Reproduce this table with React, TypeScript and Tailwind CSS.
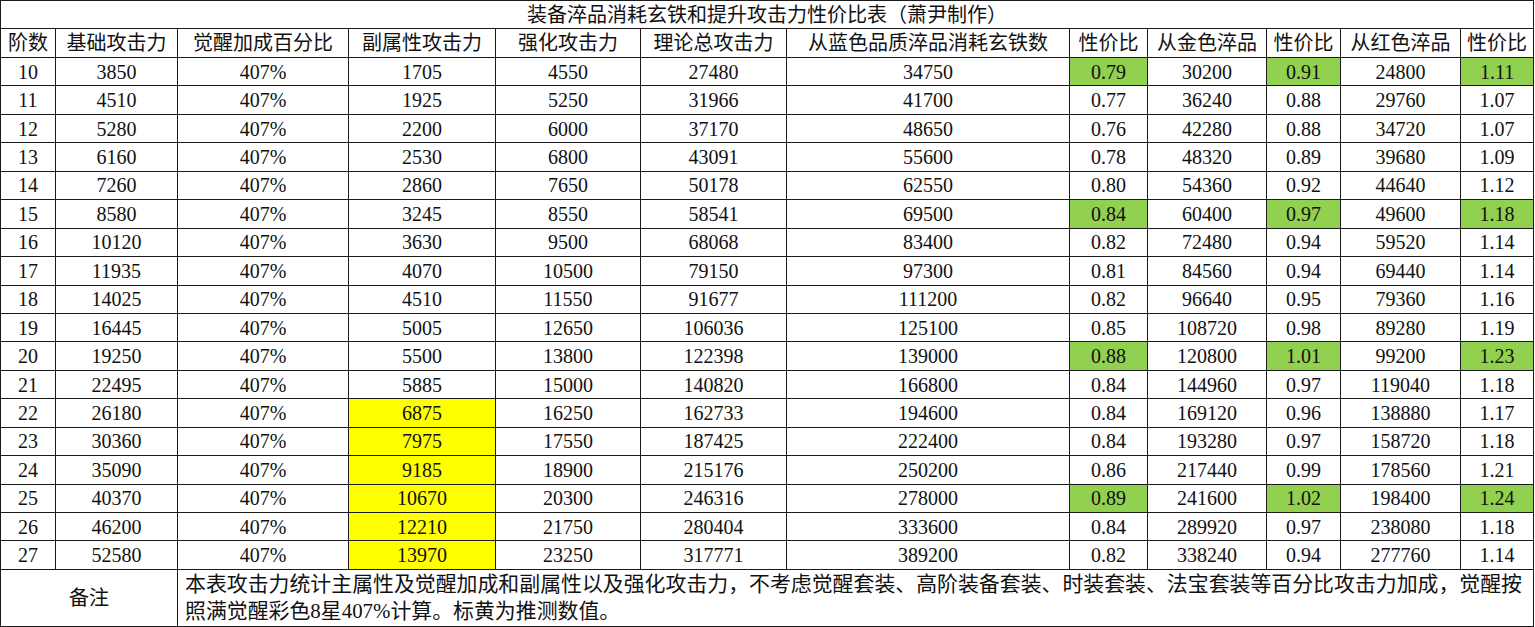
const cols = [55, 122, 171, 147, 145, 146, 283, 78, 119, 74, 120, 73]

const headers = [
  '阶数',
  '基础攻击力',
  '觉醒加成百分比',
  '副属性攻击力',
  '强化攻击力',
  '理论总攻击力',
  '从蓝色品质淬品消耗玄铁数',
  '性价比',
  '从金色淬品',
  '性价比',
  '从红色淬品',
  '性价比',
]

// 阶数, 基础, 副属性, 强化, 理论总, 蓝, 比, 金, 比, 红, 比
const rows: (string | number)[][] = [
  [10, 3850, 1705, 4550, 27480, 34750, '0.79', 30200, '0.91', 24800, '1.11'],
  [11, 4510, 1925, 5250, 31966, 41700, '0.77', 36240, '0.88', 29760, '1.07'],
  [12, 5280, 2200, 6000, 37170, 48650, '0.76', 42280, '0.88', 34720, '1.07'],
  [13, 6160, 2530, 6800, 43091, 55600, '0.78', 48320, '0.89', 39680, '1.09'],
  [14, 7260, 2860, 7650, 50178, 62550, '0.80', 54360, '0.92', 44640, '1.12'],
  [15, 8580, 3245, 8550, 58541, 69500, '0.84', 60400, '0.97', 49600, '1.18'],
  [16, 10120, 3630, 9500, 68068, 83400, '0.82', 72480, '0.94', 59520, '1.14'],
  [17, 11935, 4070, 10500, 79150, 97300, '0.81', 84560, '0.94', 69440, '1.14'],
  [18, 14025, 4510, 11550, 91677, 111200, '0.82', 96640, '0.95', 79360, '1.16'],
  [19, 16445, 5005, 12650, 106036, 125100, '0.85', 108720, '0.98', 89280, '1.19'],
  [20, 19250, 5500, 13800, 122398, 139000, '0.88', 120800, '1.01', 99200, '1.23'],
  [21, 22495, 5885, 15000, 140820, 166800, '0.84', 144960, '0.97', 119040, '1.18'],
  [22, 26180, 6875, 16250, 162733, 194600, '0.84', 169120, '0.96', 138880, '1.17'],
  [23, 30360, 7975, 17550, 187425, 222400, '0.84', 193280, '0.97', 158720, '1.18'],
  [24, 35090, 9185, 18900, 215176, 250200, '0.86', 217440, '0.99', 178560, '1.21'],
  [25, 40370, 10670, 20300, 246316, 278000, '0.89', 241600, '1.02', 198400, '1.24'],
  [26, 46200, 12210, 21750, 280404, 333600, '0.84', 289920, '0.97', 238080, '1.18'],
  [27, 52580, 13970, 23250, 317771, 389200, '0.82', 338240, '0.94', 277760, '1.14'],
]

const greenRows = [10, 15, 20, 25]
const ratioCols = [7, 9, 11]

const font = "font-['Liberation_Serif','Times_New_Roman','Noto_Sans_CJK_SC',serif]"
const cell = `border border-[#1a1a1a] text-center align-middle p-0 leading-none whitespace-nowrap ${font}`

export default function App() {
  return (
    <div className={`w-[1535px] h-[627px] bg-white text-[#111] overflow-hidden ${font}`}>
      <table className={`table-fixed border-collapse w-[1533px] text-[20px] text-[#111] ${font}`}>
        <colgroup>
          {cols.map((w, i) => (
            <col key={i} style={{ width: w }} />
          ))}
        </colgroup>
        <tbody>
          <tr className="h-[28px]">
            <td colSpan={12} className={cell}>
              装备淬品消耗玄铁和提升攻击力性价比表（萧尹制作）
            </td>
          </tr>
          <tr className="h-[29px]">
            {headers.map((h, i) => (
              <td key={i} className={cell}>
                {h}
              </td>
            ))}
          </tr>
          {rows.map((r) => {
            const lvl = r[0] as number
            const values = [r[0], r[1], '407%', ...r.slice(2)]
            return (
              <tr key={lvl} className="h-[28.44px]">
                {values.map((v, i) => {
                  let bg = ''
                  if (i === 3 && lvl >= 22) bg = 'bg-[#ffff00]'
                  if (ratioCols.includes(i) && greenRows.includes(lvl)) bg = 'bg-[#92d050]'
                  return (
                    <td key={i} className={`${cell} ${bg}`}>
                      {v}
                    </td>
                  )
                })}
              </tr>
            )
          })}
          <tr className="h-[57px]">
            <td colSpan={2} className={cell}>
              备注
            </td>
            <td colSpan={10} className={`border border-[#1a1a1a] text-left align-middle px-[7px] text-[20.9px] leading-[27px] ${font}`}>
              本表攻击力统计主属性及觉醒加成和副属性以及强化攻击力，不考虑觉醒套装、高阶装备套装、时装套装、法宝套装等百分比攻击力加成，觉醒按
              <br />
              照满觉醒彩色8星407%计算。标黄为推测数值。
            </td>
          </tr>
        </tbody>
      </table>
    </div>
  )
}
